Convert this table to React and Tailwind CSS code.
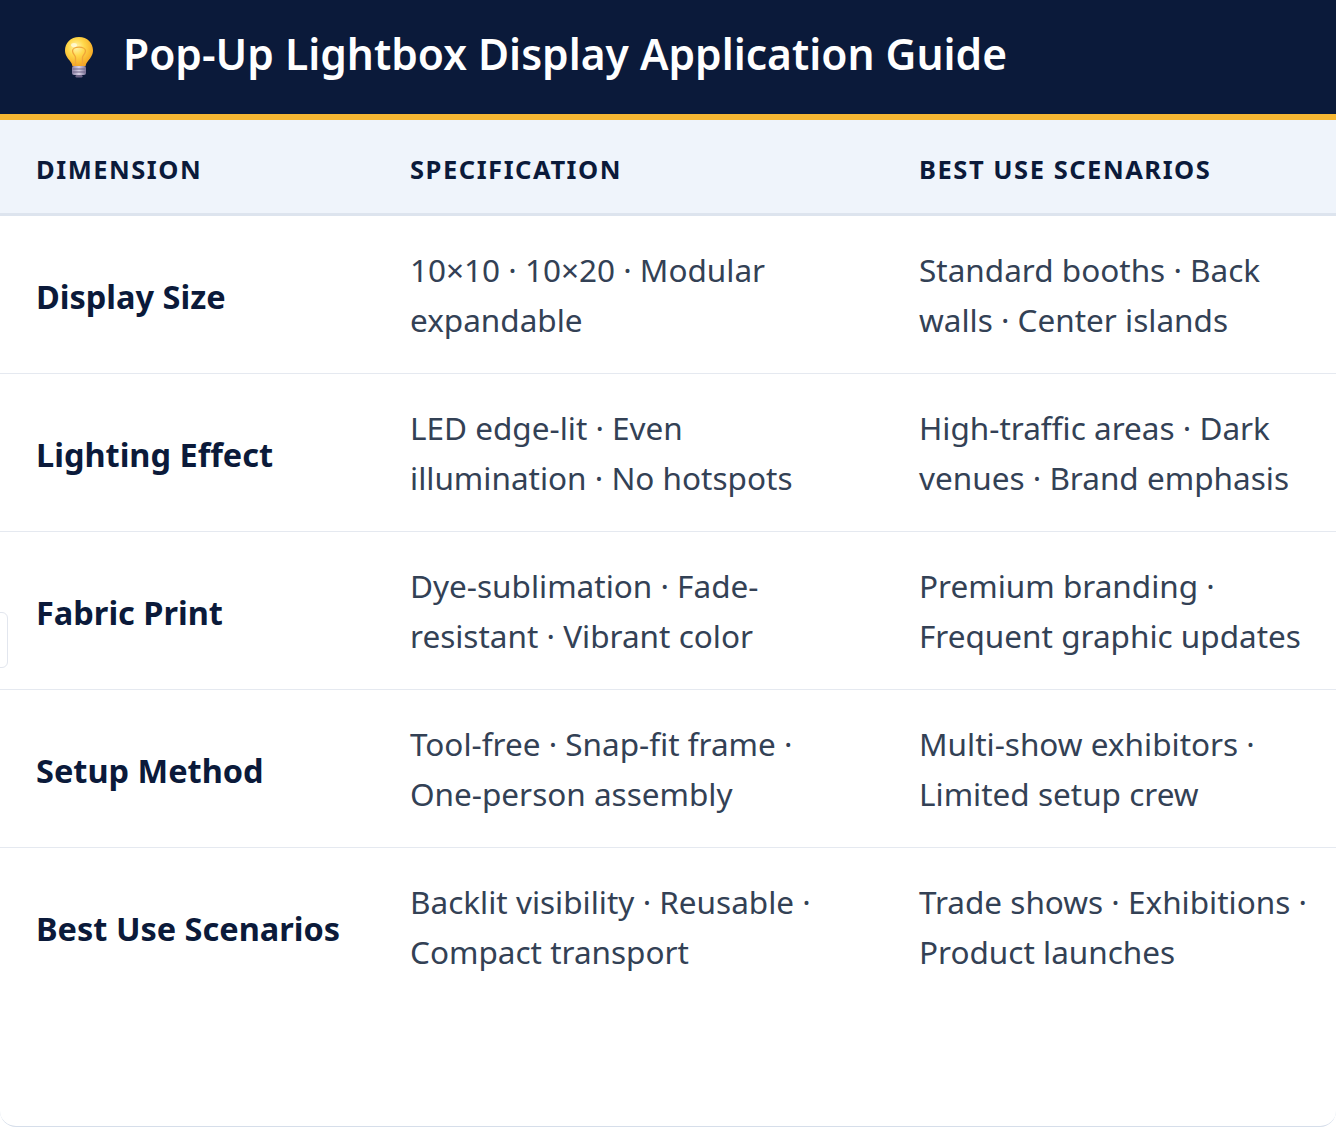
import React from 'react';

const rows = [
  {
    label: 'Display Size',
    spec: '10×10 · 10×20 · Modular expandable',
    use: 'Standard booths · Back walls · Center islands',
  },
  {
    label: 'Lighting Effect',
    spec: 'LED edge-lit · Even illumination · No hotspots',
    use: 'High-traffic areas · Dark venues · Brand emphasis',
  },
  {
    label: 'Fabric Print',
    spec: 'Dye-sublimation · Fade-resistant · Vibrant color',
    use: 'Premium branding · Frequent graphic updates',
  },
  {
    label: 'Setup Method',
    spec: 'Tool-free · Snap-fit frame · One-person assembly',
    use: 'Multi-show exhibitors · Limited setup crew',
  },
  {
    label: 'Best Use Scenarios',
    spec: 'Backlit visibility · Reusable · Compact transport',
    use: 'Trade shows · Exhibitions · Product launches',
  },
];

const Bulb = () => (
  <svg width="36" height="44" viewBox="0 0 36 44" aria-hidden="true">
    <defs>
      <radialGradient id="glow" cx="40%" cy="35%" r="65%">
        <stop offset="0%" stopColor="#fff6b0" />
        <stop offset="45%" stopColor="#ffd84a" />
        <stop offset="100%" stopColor="#f5a623" />
      </radialGradient>
      <linearGradient id="base" x1="0" x2="1">
        <stop offset="0%" stopColor="#8e84a8" />
        <stop offset="50%" stopColor="#d8d2e6" />
        <stop offset="100%" stopColor="#7d7397" />
      </linearGradient>
    </defs>
    <path
      d="M18 2C9.5 2 4 8.3 4 15.2c0 4.6 2.4 7.6 4.6 10.2 1.6 1.9 2.6 3.6 2.8 5.8h13.2c.2-2.2 1.2-3.9 2.8-5.8 2.2-2.6 4.6-5.6 4.6-10.2C32 8.3 26.5 2 18 2z"
      fill="url(#glow)"
    />
    <path
      d="M14.5 30.5v-8c0-2 -3-3.5-3-6.5 0-2.2 2.8-3.8 6.5-3.8s6.5 1.6 6.5 3.8c0 3-3 4.5-3 6.5v8"
      fill="none"
      stroke="#f0a53a"
      strokeWidth="1.3"
    />
    <ellipse cx="13" cy="10" rx="3" ry="2" fill="#fffbe0" opacity="0.8" />
    <rect x="11" y="31" width="14" height="9" rx="2" fill="url(#base)" />
    <path d="M11.5 34h13M11.5 37h13" stroke="#6c6386" strokeWidth="1" />
    <rect x="14.5" y="40" width="7" height="2.5" rx="1.2" fill="#6c6386" />
  </svg>
);

export default function App() {
  return (
    <div className="min-h-screen bg-white" style={{ fontFamily: '"Noto Sans", "Open Sans", sans-serif' }}>
      <div className="relative overflow-hidden rounded-b-2xl border-b border-[#d6deea] bg-white pb-[120px]">
        {/* header */}
        <div className="flex h-[114px] items-center gap-[26px] bg-[#0b1a3a] px-[61px] border-b-[6px] border-[#f6b733] box-content">
          <Bulb />
          <h1 className="-mt-[6px] text-[42.5px] font-semibold text-white">
            Pop-Up Lightbox Display Application Guide
          </h1>
        </div>

        {/* column heads */}
        <div className="grid grid-cols-[374px_509px_1fr] h-[96px] items-center pt-[6px] bg-[#eff4fb] border-b-[3px] border-[#dde4ee] text-[25.5px] font-bold tracking-[0.06em] text-[#0b1a3a]">
          <div className="pl-9">DIMENSION</div>
          <div className="pl-9">SPECIFICATION</div>
          <div className="pl-9">BEST USE SCENARIOS</div>
        </div>

        {/* rows */}
        {rows.map((row, i) => (
          <div
            key={row.label}
            className={`grid grid-cols-[374px_509px_1fr] h-[158px] items-center ${
              i < rows.length - 1 ? 'border-b border-[#e5e9f0]' : ''
            }`}
          >
            <div className="pl-9 pt-[5px] text-[32.5px] font-bold text-[#0b1a3a]">{row.label}</div>
            <div className="pl-9 pr-9 text-[31.5px] leading-[50px] text-[#334155]">{row.spec}</div>
            <div className="pl-9 pr-4 text-[31.5px] leading-[50px] text-[#334155]">{row.use}</div>
          </div>
        ))}

        {/* stray tab on the left edge */}
        <div className="absolute left-[-10px] top-[612px] h-[56px] w-[18px] rounded-md border border-[#e2e6ee] bg-white"></div>
      </div>
    </div>
  );
}
